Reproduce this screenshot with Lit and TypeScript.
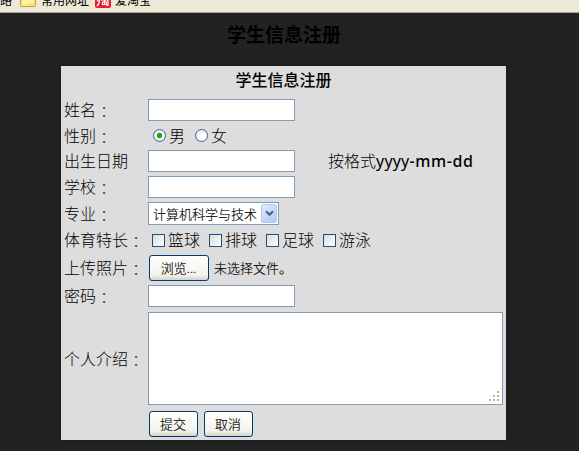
import { LitElement, html, css, svg } from "lit";
import { customElement } from "lit/decorators.js";

const colon = html`<span class="colon">：</span>`;
const sports = ["篮球", "排球", "足球", "游泳"];

@customElement("app-root")
export class AppRoot extends LitElement {
  static styles = css`
    * { box-sizing: border-box; }
    :host {
      display: flex;
      flex-direction: column;
      width: 579px;
      height: 451px;
      overflow: hidden;
      background: #222;
      color: #000;
      font: 300 16px/20px "Noto Sans", "Noto Sans CJK SC", sans-serif;
      white-space: nowrap;
    }
    .bookmarks {
      flex: none;
      height: 13px;
      display: flex;
      align-items: flex-end;
      background: #ece9d8;
      border-bottom: 1px solid #aca899;
      overflow: hidden;
      font: 12px/16px "Noto Sans CJK SC", sans-serif;
    }
    .bookmarks span { flex: none; height: 16px; margin-bottom: 4px; }
    .tail { width: 12px; }
    .bookmarks svg { flex: none; margin: 0 5px 5px 8px; }
    .bookmarks svg.shop { margin: 0 4px 4px 6px; }
    .wide { width: 48px; }
    h1 {
      flex: none;
      height: 53px;
      margin: 0;
      padding: 7px 11px 0 0;
      text-align: center;
      font: bold 19px/28px "Noto Sans CJK SC", sans-serif;
    }
    form {
      flex: none;
      width: 445px;
      height: 374px;
      margin: 0 0 0 61px;
      padding: 0 3px 0 3px;
      background: #ddd;
      box-shadow: 0 0 5px rgba(0, 0, 0, 0.35);
      display: grid;
      grid-template-columns: 84px 1fr;
      grid-template-rows: 31px 26px 25px 26px 26px 27px 26px 30px 26px 99px 32px;
      align-items: center;
    }
    h2 {
      grid-column: 1 / -1;
      margin: 0 0 6px;
      text-align: center;
      font: 500 16px/20px "Noto Sans CJK SC", sans-serif;
    }
    .colon {
      font-family: "Noto Sans CJK TC", sans-serif;
      line-height: 0;
      vertical-align: -2px;
      color: #444;
    }
    .cell { display: flex; align-items: center; }
    input, .select, textarea {
      border: 1px solid #7f9db9;
      background: #fff;
      border-radius: 0;
      outline: none;
      margin: 0;
    }
    .text { width: 147px; height: 22px; display: block; }
    .hint { margin-left: 33px; }
    .format { font-weight: 400; letter-spacing: 0.2px; }
    .strong { font-weight: 500; letter-spacing: 0.6px; }
    .radio {
      appearance: none;
      width: 13px;
      height: 13px;
      border: 1px solid #35679b;
      border-radius: 50%;
      background: radial-gradient(circle at 65% 65%, #fff 30%, #dcdcd7);
      margin: 0 3px 0 5px;
    }
    .radio:checked {
      background: radial-gradient(circle, #21a121 0 2.3px, #fff 3.2px, #e9e9e4 6px);
    }
    .radio.second { margin-left: 10px; }
    .check {
      appearance: none;
      width: 13px;
      height: 13px;
      border: 1px solid #1c5180;
      background: linear-gradient(135deg, #dcdcd7, #fff);
      margin: 0 3px 0 4px;
    }
    .sport { display: flex; align-items: center; width: 57px; }
    .select {
      width: 131px;
      height: 23px;
      display: flex;
      align-items: center;
      justify-content: space-between;
      padding: 0 1px 0 4px;
      font-size: 13px;
    }
    .arrow {
      width: 16px;
      height: 19px;
      display: grid;
      place-items: center;
      border-radius: 2px;
      border: 1px solid #b4c8f6;
      background: linear-gradient(135deg, #e1eafe, #aec8f7);
    }
    button {
      height: 26px;
      width: 49px;
      padding: 0 1px 0 0;
      border: 1px solid #003c74;
      border-radius: 3px;
      background: linear-gradient(#fff, #f3f2ea 80%, #d6d0c5);
      color: #000;
      font: 300 13px/20px "Noto Sans", "Noto Sans CJK SC", sans-serif;
      margin-right: 6px;
    }
    .cell.buttons { padding: 0 0 1px 1px; }
    .browse { width: 60px; margin-left: 1px; margin-right: 5px; }
    .file { font-size: 13px; }
    .select, .file, button { -webkit-text-stroke: 0.15px #000; }
    textarea { width: 355px; height: 93px; display: block; resize: none; }
    .area { display: grid; }
    .area > * { grid-area: 1 / 1; }
    .grip { align-self: end; justify-self: end; margin: 0 4px 4px 0; }
  `;

  private label(text: string) {
    return html`<div>${text}${colon}</div>`;
  }

  render() {
    return html`
      <div class="bookmarks">
        <span class="tail">路</span>
        <svg width="16" height="7" viewBox="0 0 16 7">
          <path d="M.5 -2V5.5Q.5 6.5 1.5 6.5H14.5Q15.5 6.5 15.5 5.5V-2Z" fill="#fbe27d" stroke="#c99a35" />
          <path d="M2 0H14V2L2 5Z" fill="#fff2a8" />
        </svg>
        <span class="wide">常用网址</span>
        <svg class="shop" width="16" height="8" viewBox="0 0 16 8">
          <path d="M0 0H16V6Q16 8 14 8H2Q0 8 0 6Z" fill="#e6212f" />
          <path d="M2 0L3.5 1.2M4.5 0Q4.5 4 2 6M6 0H13V5.5H11.5M7 2H12M9.5 0V4.5M7.5 2.5V4.5H11.5V2.5"
            fill="none" stroke="#fff" stroke-width="1.2" />
        </svg>
        <span>爱淘宝</span>
      </div>
      <h1>学生信息注册</h1>
      <form>
        <h2>学生信息注册</h2>
        ${this.label("姓名")}
        <input class="text" />
        ${this.label("性别")}
        <div class="cell">
          <input class="radio" type="radio" name="sex" checked />男
          <input class="radio second" type="radio" name="sex" />女
        </div>
        <div>出生日期</div>
        <div class="cell"><input class="text" /><span class="hint">按格式<span class="format">yyyy</span><span class="strong">-mm-dd</span></span></div>
        ${this.label("学校")}
        <input class="text" />
        ${this.label("专业")}
        <div class="select">
          计算机科学与技术
          <span class="arrow">
            <svg width="9" height="7" viewBox="0 0 9 7">
              <path d="M1 1.2L4.5 4.7L8 1.2" fill="none" stroke="#4d6185" stroke-width="2.2" />
            </svg>
          </span>
        </div>
        ${this.label("体育特长")}
        <div class="cell">
          ${sports.map((s) => html`<label class="sport"><input class="check" type="checkbox" />${s}</label>`)}
        </div>
        ${this.label("上传照片")}
        <div class="cell"><button class="browse" type="button">浏览...</button><span class="file">未选择文件。</span></div>
        ${this.label("密码")}
        <input class="text" type="password" />
        ${this.label("个人介绍")}
        <div class="area">
          <textarea></textarea>
          <svg class="grip" width="10" height="10" viewBox="0 0 10 10">
            ${[[8, 0], [4, 4], [8, 4], [0, 8], [4, 8], [8, 8]].map(
              ([x, y]) => svg`<rect x=${x} y=${y} width="2" height="2" fill="#b8b5a0" />`
            )}
          </svg>
        </div>
        <div></div>
        <div class="cell buttons"><button type="button">提交</button><button type="button">取消</button></div>
      </form>
    `;
  }
}
